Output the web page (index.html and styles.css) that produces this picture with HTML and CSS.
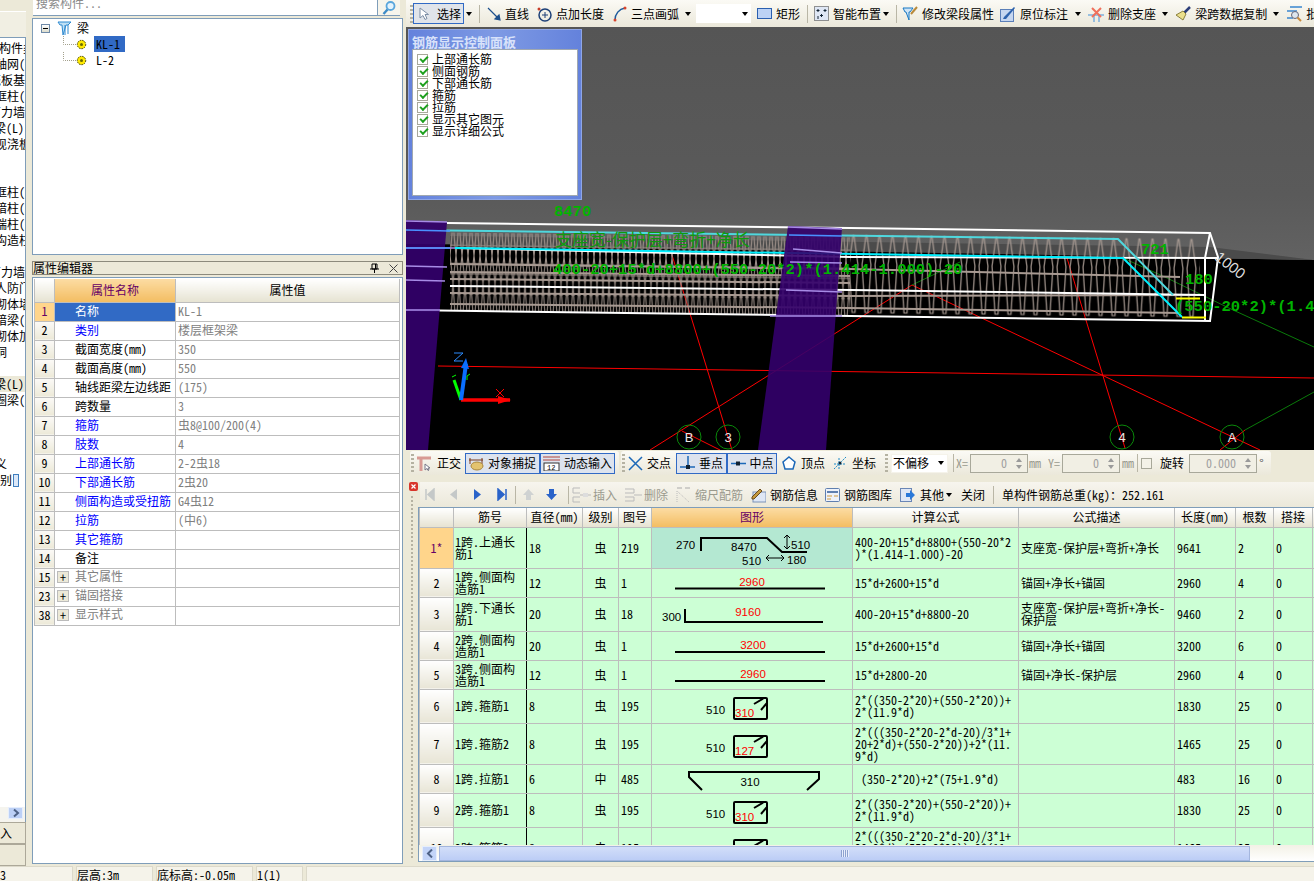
FILE: index.html
```html
<!DOCTYPE html>
<html lang="zh-CN">
<head>
<meta charset="utf-8">
<title>钢筋显示</title>
<link rel="stylesheet" href="styles.css">
</head>
<body>
<div class="app">
  <div class="main">
    <nav class="nav">
      <div class="nav-cap"></div>
      <div class="nav-cap2"></div>
      <div class="nav-list">
        <div class="nr"><span class="o1">构件类型</span></div>
        <div class="nr"><span class="o5">轴网(J)</span></div>
        <div class="nr"><span class="o11">筏板基础</span></div>
        <div class="nr"><span class="o5">框柱(Z)</span></div>
        <div class="nr"><span class="o11">剪力墙(Q)</span></div>
        <div class="nr"><span class="o6">梁(L)</span></div>
        <div class="nr"><span class="o5">现浇板</span></div>
        <div class="nr"></div>
        <div class="nr"></div>
        <div class="nr"><span class="o5">框柱(Z)</span></div>
        <div class="nr"><span class="o5">暗柱(Z)</span></div>
        <div class="nr"><span class="o5">端柱(Z)</span></div>
        <div class="nr"><span class="o5">构造柱</span></div>
        <div class="nr"></div>
        <div class="nr"><span class="o11">剪力墙</span></div>
        <div class="nr"><span class="o5">人防门</span></div>
        <div class="nr"><span class="o5">砌体墙</span></div>
        <div class="nr"><span class="o5">暗梁(A)</span></div>
        <div class="nr"><span class="o5">砌体加筋</span></div>
        <div class="nr"><span class="o5">洞</span></div>
        <div class="nr"></div>
        <div class="nr nr-sel"><span class="o6">梁(L)</span></div>
        <div class="nr"><span class="o5">圈梁(E)</span></div>
        <div class="nr"></div>
        <div class="nr"></div>
        <div class="nr"></div>
        <div class="nr"><span class="o17">定义</span></div>
        <div class="nr"><span class="o12">识别</span><i class="nav-ic"></i></div>
        <div class="nav-fill"></div>
        <div class="nav-scroll"><svg width="15" height="12" viewBox="0 0 15 12"><rect x=".5" y=".5" width="14" height="11" fill="#bcd0f6" stroke="#e6eefc"/><path d="M6 2.5l4 3.5-4 3.5" fill="none" stroke="#4d6185" stroke-width="2"/></svg></div>
      </div>
      <div class="nav-btn"><span class="o12">导入</span></div>
      <div class="nav-btn"></div>
    </nav>

    <section class="mid">
      <div class="search">
        <div class="search-in"><span>搜索构件...</span></div>
        <div class="search-btn"><svg width="16" height="16" viewBox="0 0 16 16"><circle cx="9.5" cy="6" r="4" fill="#e4f3fd" stroke="#5aa6dc" stroke-width="1.8"/><path d="M6.5 9.5L2.5 14" stroke="#3d8bc7" stroke-width="2.4"/></svg></div>
      </div>
      <div class="tree">
        <div class="t-root">
          <span class="t-minus"></span>
          <svg class="t-ic" width="15" height="16" viewBox="0 0 15 16"><path d="M1 2h13l-3 3H9l-3 10-1-10H3z" fill="#bfe0f5" stroke="#2f8ad0"/><path d="M8 5v10M11 5v9" stroke="#2f8ad0"/></svg>
          <span>梁</span>
        </div>
        <div class="t-kid">
          <svg class="t-conn" width="13" height="16" viewBox="0 0 13 16"><path d="M.5 0v8.5H13" fill="none" stroke="#a3a08c" stroke-dasharray="1 1"/></svg>
          <svg class="t-gear" width="11" height="11" viewBox="0 0 11 11"><circle cx="5.5" cy="5.5" r="4.2" fill="#ffe900" stroke="#3b3b00" stroke-dasharray="1.5 1"/><circle cx="5.5" cy="5.5" r="1.5" fill="#6a6a00"/></svg>
          <span class="t-sel">KL-1</span>
        </div>
        <div class="t-kid">
          <svg class="t-conn" width="13" height="16" viewBox="0 0 13 16"><path d="M.5 0v8.5H13" fill="none" stroke="#a3a08c" stroke-dasharray="1 1"/></svg>
          <svg class="t-gear" width="11" height="11" viewBox="0 0 11 11"><circle cx="5.5" cy="5.5" r="4.2" fill="#ffe900" stroke="#3b3b00" stroke-dasharray="1.5 1"/><circle cx="5.5" cy="5.5" r="1.5" fill="#6a6a00"/></svg>
          <span class="t-lbl">L-2</span>
        </div>
      </div>
      <div class="prop-head">
        <span>属性编辑器</span>
        <span class="prop-tools">
          <svg width="9" height="10" viewBox="0 0 9 10"><path d="M2 1h5v5H2zM0 6h9M4.5 6v4M5.5 1v5" fill="none" stroke="#000"/></svg>
          <svg width="9" height="9" viewBox="0 0 9 9"><path d="M.5.5l8 8M8.5.5l-8 8" stroke="#444"/></svg>
        </span>
      </div>
      <div class="prop-box">
        <table class="prop">
          <colgroup><col class="pc1"><col class="pc2"><col class="pc3"></colgroup>
          <tr><th class="pn"></th><th class="orange">属性名称</th><th>属性值</th></tr>
          <tr><td class="pn pn-sel">1</td><td class="nm nm-sel">名称</td><td class="v">KL-1</td></tr>
          <tr><td class="pn">2</td><td class="nm b">类别</td><td class="v">楼层框架梁</td></tr>
          <tr><td class="pn">3</td><td class="nm">截面宽度(mm)</td><td class="v">350</td></tr>
          <tr><td class="pn">4</td><td class="nm">截面高度(mm)</td><td class="v">550</td></tr>
          <tr><td class="pn">5</td><td class="nm">轴线距梁左边线距</td><td class="v">(175)</td></tr>
          <tr><td class="pn">6</td><td class="nm">跨数量</td><td class="v">3</td></tr>
          <tr><td class="pn">7</td><td class="nm b">箍筋</td><td class="v">虫8@100/200(4)</td></tr>
          <tr><td class="pn">8</td><td class="nm b">肢数</td><td class="v">4</td></tr>
          <tr><td class="pn">9</td><td class="nm b">上部通长筋</td><td class="v">2-2虫18</td></tr>
          <tr><td class="pn">10</td><td class="nm b">下部通长筋</td><td class="v">2虫20</td></tr>
          <tr><td class="pn">11</td><td class="nm b">侧面构造或受扭筋</td><td class="v">G4虫12</td></tr>
          <tr><td class="pn">12</td><td class="nm b">拉筋</td><td class="v">(中6)</td></tr>
          <tr><td class="pn">13</td><td class="nm b">其它箍筋</td><td class="v"></td></tr>
          <tr><td class="pn">14</td><td class="nm">备注</td><td class="v"></td></tr>
          <tr><td class="pn">15</td><td class="nm g"><i class="plus"></i>其它属性</td><td class="v"></td></tr>
          <tr><td class="pn">23</td><td class="nm g"><i class="plus"></i>锚固搭接</td><td class="v"></td></tr>
          <tr><td class="pn">38</td><td class="nm g"><i class="plus"></i>显示样式</td><td class="v"></td></tr>
        </table>
      </div>
    </section>

    <section class="right">
      <div class="tb top">
        <i class="grip m4"></i>
        <span class="btn sel-btn"><svg width="10" height="13" viewBox="0 0 10 13"><path d="M1 1v10l3-2.500 2 4 2-1-2-4h3.500z" fill="#fff" stroke="#7d8fa6"/></svg><span>选择</span></span>
        <i class="caret w10"></i>
        <i class="sep m5"></i>
        <span class="ti m7"><svg width="14" height="14" viewBox="0 0 14 14"><path d="M1 1l11 11M13 13l-5-1 4-4z" stroke="#1d4f8c" fill="#1d4f8c" stroke-width="1.200"/></svg><span>直线</span></span>
        <span class="ti m8"><svg width="15" height="16" viewBox="0 0 15 16"><circle cx="8" cy="9" r="6" fill="none" stroke="#1c3f77" stroke-width="1.500"/><path d="M8 6v6M5 9h6" stroke="#1c3f77"/><circle cx="2" cy="3" r="1.500" fill="#c83c28"/></svg><span>点加长度</span></span>
        <span class="ti m9"><svg width="14" height="16" viewBox="0 0 14 16"><path d="M2 14C2 8 6 3 12 2" fill="none" stroke="#1c5a9c" stroke-width="1.500"/><circle cx="2" cy="14" r="1.500" fill="#d8442c"/><circle cx="12" cy="2" r="1.500" fill="#d8442c"/></svg><span>三点画弧</span></span>
        <i class="caret w10 m4"></i>
        <span class="combo m3"><i class="caret w10"></i></span>
        <span class="ti m6"><svg width="15" height="11" viewBox="0 0 15 11"><rect x=".5" y=".5" width="14" height="10" fill="#bcd2f5" stroke="#2a5fb0"/></svg><span>矩形</span></span>
        <i class="sep m7"></i>
        <span class="ti m6"><svg width="15" height="15" viewBox="0 0 15 15"><rect x=".5" y=".5" width="14" height="14" fill="#dfe7f5" stroke="#333" stroke-dasharray="1 1"/><path d="M4 3v3M2.500 4.500h3M11 3v3M9.500 4.500h3M7.500 8v3M6 9.500h3M4 10v3" stroke="#123"/></svg><span>智能布置</span></span>
        <i class="caret w10"></i>
        <i class="sep m5"></i>
        <span class="ti m5"><svg width="16" height="16" viewBox="0 0 16 16"><path d="M1 2h10l-3 4H7v8L4 6H3z" fill="#cfe5f7" stroke="#1878c4"/><path d="M9 8l6-7" stroke="#b8893a" stroke-width="2"/></svg><span>修改梁段属性</span></span>
        <span class="ti m6"><svg width="16" height="16" viewBox="0 0 16 16"><rect x=".5" y="3.500" width="13" height="12" fill="#c5d6f0" stroke="#5b7fb8"/><path d="M4 11L14 1l1 1L6 13H3z" fill="#2d62ad"/></svg><span>原位标注</span></span>
        <i class="caret w10 m5"></i>
        <span class="ti m5"><svg width="16" height="16" viewBox="0 0 16 16"><path d="M0 9h16M6 9v7M11 9v7" stroke="#3f8fd9"/><path d="M4 2l9 9M13 2l-9 9" stroke="#f0705c" stroke-width="2"/></svg><span>删除支座</span></span>
        <i class="caret w10 m4"></i>
        <span class="ti m5"><svg width="16" height="16" viewBox="0 0 16 16"><path d="M9 7l6-6" stroke="#2e3f7a" stroke-width="2.500"/><path d="M8 5l3 3-3 6-7-5z" fill="#ece08c" stroke="#8a7f3c"/></svg><span>梁跨数据复制</span></span>
        <i class="caret w10 m4"></i>
        <span class="ti m5"><svg width="16" height="16" viewBox="0 0 16 16"><path d="M4 1h12M1 5h10M1 12h6" stroke="#3a87cf" stroke-width="1.500"/><circle cx="9" cy="9" r="3.500" fill="#dde6ee" stroke="#667"/><path d="M11.500 11.500l3.500 3.500" stroke="#c98a3c" stroke-width="2"/></svg><span>批量选择</span></span>
      </div>

      <div class="view">
        <svg class="scene" width="908" height="423" viewBox="406 27 908 423">
          <defs>
            <linearGradient id="bgG" x1="0" y1="0" x2="0" y2="1"><stop offset="0" stop-color="#555"/><stop offset=".72" stop-color="#5a5a5a"/><stop offset="1" stop-color="#626262"/></linearGradient>
            <pattern id="dense" x="0" y="222" width="6" height="86" patternUnits="userSpaceOnUse" patternTransform="skewY(.7)">
              <path d="M2 5L0 28 3 56 1 84M4 5L6 28 3 56 5 84M1 18h4M0 36h6M0 46h6M1 66h4" fill="none" stroke="#a89a92" stroke-width="1"/>
            </pattern>
            <pattern id="sparse" x="2" y="222" width="13" height="86" patternUnits="userSpaceOnUse" patternTransform="skewY(.7)">
              <path d="M6 3L2 32 5 80 8 80 11 32 7 3z" fill="none" stroke="#a89a92" stroke-width="1.200"/>
            </pattern>
          </defs>
          <rect x="406" y="27" width="908" height="423" fill="#000"/>
          <path d="M406 27H1314V260L1200 258 1000 251 700 246 406 244z" fill="url(#bgG)"/>
          <path d="M450 236L1210 247 1314 260 1200 258 1000 254 700 249 450 246z" fill="#4b4b4b"/>
          <!-- grid axes -->
          <g fill="none" stroke="#f00" stroke-width="1">
            <path d="M438 366L1314 378"/>
            <path d="M672 255L732 450"/>
            <path d="M1067 258L1125 448"/>
            <path d="M912 285L1260 450"/>
            <path d="M650 450L912 285"/>
            <path d="M682 431L720 450"/>
            <path d="M1220 450L1245 430"/>
          </g>
          <g fill="none" stroke="#0a7a0a" stroke-width="1">
            <path d="M1245 430L1314 392"/>
            <path d="M1123 258L1167 278 1233 310 1314 347"/>
            <path d="M912 285L960 262"/>
          </g>
          <!-- stirrups -->
          <path d="M450 228L850 233V316L450 311z" fill="url(#dense)"/>
          <path d="M850 233L1200 238V320L850 316z" fill="url(#sparse)"/>
          <g fill="none" stroke="#a89a92" stroke-width="2">
            <path d="M450 264L850 269 1180 277"/>
            <path d="M450 272L850 276"/>
            <path d="M450 279L850 283"/>
            <path d="M450 293L850 296 1205 295"/>
            <path d="M450 304L850 308 1180 313"/>
          </g>
          <!-- beam box -->
          <g fill="none" stroke="#fff" stroke-width="2">
            <path d="M447 223L850 228 1210 233 1218 257 1210 321 850 316 406 310"/>
            <path d="M455 248L850 257 1218 258"/>
            <path d="M450 286L850 290 1205 295"/>
            <path d="M1210 233L1205 258V321"/>
          </g>
          <path d="M406 230L1118 239 1173 295" fill="none" stroke="#4fd8de" stroke-width="2"/>
          <path d="M455 248L1123 258 1182 317" fill="none" stroke="#00f0ff" stroke-width="2"/>
          <path d="M1176 298.500H1200M1182 317.500H1206" stroke="#ff0" stroke-width="2"/>
          <!-- columns -->
          <path d="M406 220L447 222 428 450H406z" fill="#33006b" fill-opacity=".93"/>
          <path d="M788 226L842 228 826 450H758z" fill="#33006b" fill-opacity=".9"/>
          <g fill="none" stroke="#a78be6" stroke-width="1.500">
            <path d="M406 221L447 222M406 248L455 248M406 266L447 267M406 280L445 281M406 310L440 310"/>
            <path d="M788 227L842 229M793 249L842 253M790 262L842 263M786 290L842 292M770 316L842 316"/>
          </g>
          <path d="M406 230L450 231M789 235L842 236M406 248L450 248" stroke="#4a90ff" stroke-width="1.500"/>
          <!-- green dimensions -->
          <g class="dim">
            <text x="554" y="216">8470</text>
            <text x="555" y="246" class="dim-cn">支座宽-保护层+弯折+净长</text>
            <text x="553" y="274">400-20+15*d+8800+(550-20*2)*(1.414-1.000)-20</text>
            <text x="1141" y="254">721</text>
            <text x="1185" y="284">180</text>
            <text x="1175" y="311">(550-20*2)*(1.41</text>
          </g>
          <text x="1214" y="259" class="white-dim" transform="rotate(38 1214 259)">1000</text>
          <!-- axis bubbles -->
          <g fill="none" stroke="#0a8a0a">
            <circle cx="689" cy="437" r="12"/><circle cx="728" cy="437" r="12"/>
            <circle cx="1122" cy="437" r="12"/><circle cx="1232" cy="437" r="12"/>
          </g>
          <g class="bubble">
            <text x="689" y="442">B</text><text x="728" y="442">3</text>
            <text x="1122" y="442">4</text><text x="1232" y="442">A</text>
          </g>
          <!-- gizmo -->
          <path d="M461 400L510 400" stroke="#f00" stroke-width="3.500"/><path d="M498 396L511 400 498 404z" fill="#f00"/>
          <path d="M461 400L454 380" stroke="#0f0" stroke-width="3"/>
          <path d="M461 400L466 364" stroke="#0a6eff" stroke-width="4"/><path d="M461 368L466 358 469 369z" fill="#0a6eff"/>
          <path d="M454 353H463L454 361H463" fill="none" stroke="#2d8cff"/>
          <path d="M496 389L504 397M504 389L496 397" stroke="#f00"/>
          <path d="M467 376L470 374M467 380L467 376M452 377L456 375" stroke="#0f0"/>
        </svg>

        <aside class="panel">
          <div class="panel-title">钢筋显示控制面板</div>
          <div class="panel-body">
            <label class="ck"><i class="box"></i>上部通长筋</label>
            <label class="ck"><i class="box"></i>侧面钢筋</label>
            <label class="ck"><i class="box"></i>下部通长筋</label>
            <label class="ck"><i class="box"></i>箍筋</label>
            <label class="ck"><i class="box"></i>拉筋</label>
            <label class="ck"><i class="box"></i>显示其它图元</label>
            <label class="ck"><i class="box"></i>显示详细公式</label>
          </div>
        </aside>
      </div>

      <div class="snap">
        <div class="tb bar bar1">
          <i class="grip m1"></i>
          <span class="ti m3 g5"><svg width="15" height="15" viewBox="0 0 15 15"><path d="M0 2h14M4 2v13" stroke="#d89a94" stroke-width="3"/><path d="M8 8v6l2-1.500 1 2 1-.5-1-2h2z" fill="#fff" stroke="#778"/></svg><span>正交</span></span>
          <span class="btn on w75 m4"><svg width="15" height="15" viewBox="0 0 15 15"><path d="M1 2v6M13 2v6M0 4h14" stroke="#7b3a1c"/><ellipse cx="8" cy="10" rx="6" ry="4" fill="#e3c36f" stroke="#a8853a"/></svg><span>对象捕捉</span></span>
          <span class="btn on w75"><svg width="17" height="15" viewBox="0 0 17 15"><path d="M0 1h17M0 4h17" stroke="#b1443c"/><rect x="1" y="7" width="15" height="8" fill="#fff" stroke="#333"/><text x="4" y="14" class="mini">12</text></svg><span>动态输入</span></span>
        </div>
        <div class="tb bar bar2">
          <i class="grip m1"></i>
          <span class="ti m3"><svg width="15" height="15" viewBox="0 0 15 15"><path d="M1 1l13 13M14 1L1 14" stroke="#1c68b8" stroke-width="1.500"/></svg><span>交点</span></span>
          <span class="btn on w51 m5"><svg width="15" height="15" viewBox="0 0 15 15"><path d="M0 11h15M8 0v11" stroke="#1c68b8" stroke-width="1.500"/><rect x="6" y="9" width="4" height="4" fill="#123"/></svg><span>垂点</span></span>
          <span class="btn on w50"><svg width="15" height="15" viewBox="0 0 15 15"><path d="M0 7.500h15" stroke="#1c68b8" stroke-width="1.500"/><rect x="5" y="5.500" width="4" height="4" fill="#123"/></svg><span>中点</span></span>
          <span class="ti m4"><svg width="16" height="16" viewBox="0 0 16 16"><path d="M8 2l6 5-2 7H4L2 7z" fill="#fff" stroke="#1c68b8" stroke-width="1.500"/></svg><span>顶点</span></span>
          <span class="ti m7"><svg width="16" height="16" viewBox="0 0 16 16"><path d="M2 14L14 2M7 3v12M2 9h12" stroke="#1c8ac8" stroke-dasharray="2 1"/><circle cx="8" cy="8" r="1.500" fill="#123"/></svg><span>坐标</span></span>
          <i class="grip m9"></i>
          <span class="combo combo2 m3"><span>不偏移</span><i class="caret w10"></i></span>
          <i class="sep m5"></i>
          <span class="off m2">X=</span>
          <span class="spin w58 m2"><span>0</span></span>
          <span class="off m1">mm</span>
          <span class="off m7">Y=</span>
          <span class="spin w58 m2"><span>0</span></span>
          <span class="off m2">mm</span>
          <i class="sep m3"></i>
          <i class="cbx m3"></i>
          <span class="m8">旋转</span>
          <span class="spin w68 m5"><span>0.000</span></span>
          <span class="off m2 deg">°</span>
        </div>
      </div>

      <div class="rebar">
        <div class="strip">
          <span class="close-x"><svg width="9" height="9" viewBox="0 0 9 9"><rect width="9" height="9" rx="2" fill="#d8352a"/><path d="M2.500 2.500l4 4M6.500 2.500l-4 4" stroke="#fff" stroke-width="1.200"/></svg></span>
          <i class="dots"></i>
        </div>
        <div class="rebar-main">
          <div class="tb gtb">
            <svg class="m5" width="10" height="13" viewBox="0 0 10 13"><path d="M1 1v11M9 1L3 6.500 9 12z" fill="#c4c8c8" stroke="#c4c8c8" stroke-width="1.500"/></svg>
            <svg class="m14" width="9" height="13" viewBox="0 0 9 13"><path d="M8 1L1 6.500 8 12z" fill="#c4c8c8"/></svg>
            <svg class="m15" width="9" height="13" viewBox="0 0 9 13"><path d="M1 1l7 5.500L1 12z" fill="#2a63c9"/></svg>
            <svg class="m15" width="10" height="13" viewBox="0 0 10 13"><path d="M1 1l6 5.500L1 12zM9 1v11" fill="#2a63c9" stroke="#2a63c9" stroke-width="1.500"/></svg>
            <i class="sep m8"></i>
            <svg class="m7" width="11" height="11" viewBox="0 0 11 11"><path d="M5.500 0L11 6H8v5H3V6H0z" fill="#cfd2d2"/></svg>
            <svg class="m12" width="11" height="11" viewBox="0 0 11 11"><path d="M5.500 11L11 5H8V0H3v5H0z" fill="#2a63c9"/></svg>
            <i class="sep m11"></i>
            <span class="ti off m3 g1"><svg width="20" height="16" viewBox="0 0 20 16"><path d="M8 1H1v5h7M8 10H1v5h7M8 8h11" fill="none" stroke="#bbb"/><rect x="11" y="6" width="5" height="4" fill="#ddd"/></svg><span>插入</span></span>
            <span class="ti off m7 g1"><svg width="19" height="16" viewBox="0 0 19 16"><path d="M1 2h9v4H1M1 10h9v4H1M10 8h8" fill="none" stroke="#bbb"/></svg><span>删除</span></span>
            <span class="ti off m8 g5"><svg width="14" height="16" viewBox="0 0 14 16"><path d="M1 15V4l12 11" fill="none" stroke="#bbb" stroke-dasharray="1 1"/><path d="M1 1h5M9 1h5" stroke="#aaa"/></svg><span>缩尺配筋</span></span>
            <span class="ti m8"><svg width="15" height="16" viewBox="0 0 15 16"><rect x="2" y="5" width="13" height="10" fill="#dfe7f5" stroke="#7a92b8"/><path d="M1 10L9 2l2 2-8 8H1z" fill="#c59a3e" stroke="#6b4b1c"/></svg><span>钢筋信息</span></span>
            <span class="ti m7"><svg width="15" height="14" viewBox="0 0 15 14"><rect x=".5" y=".5" width="14" height="13" rx="1" fill="#eef2fa" stroke="#5f7fb0"/><path d="M2 4h11" stroke="#5f7fb0" stroke-width="2"/><path d="M2 8h5M9 8h4M2 11h4" stroke="#d09a3c"/></svg><span>钢筋图库</span></span>
            <span class="ti m8 g5"><svg width="15" height="14" viewBox="0 0 15 14"><rect x=".5" y=".5" width="11" height="13" fill="#dfe7f5" stroke="#6a86b6"/><path d="M6 5h4V2l5 5-5 5V9H6z" fill="#2a78d8"/></svg><span>其他</span></span>
            <i class="caret w10"></i>
            <span class="m7">关闭</span>
            <i class="sep m8"></i>
            <span class="m8">单构件钢筋总重(kg)：252.161</span>
          </div>
          <div class="grid-wrap">
            <table class="grid">
              <colgroup><col class="c1"><col class="c2"><col class="c3"><col class="c4"><col class="c5"><col class="c6"><col class="c7"><col class="c8"><col class="c9"><col class="c10"><col class="c11"><col class="c12"></colgroup>
              <tr class="gh"><th></th><th>筋号</th><th>直径(mm)</th><th>级别</th><th>图号</th><th class="orange">图形</th><th>计算公式</th><th>公式描述</th><th>长度(mm)</th><th>根数</th><th>搭接</th><th></th></tr>
              <tr class="h41"><td class="rn rn-sel">1*</td><td class="k">1跨.上通长<br>筋1</td><td>18</td><td class="ctr">虫</td><td>219</td>
                <td class="fig fig-sel"><svg width="200" height="40" viewBox="651 527 200 40"><path d="M700 550V537H766L781 551H806" fill="none" stroke="#000" stroke-width="2"/><path d="M786 534V548M783 537l3-3 3 3M783 545l3 3 3-3M765 557H783M768 554l-3 3 3 3M780 554l3 3-3 3" fill="none" stroke="#000"/><text x="675" y="548" class="n">270</text><text x="730" y="550" class="n">8470</text><text x="790" y="548" class="n">510</text><text x="741" y="564" class="n">510</text><text x="786" y="563" class="n">180</text></svg></td>
                <td class="f">400-20+15*d+8800+(550-20*2<br>)*(1.414-1.000)-20</td><td>支座宽-保护层+弯折+净长</td><td>9641</td><td>2</td><td>0</td><td></td></tr>
              <tr class="h29"><td class="rn">2</td><td class="k">1跨.侧面构<br>造筋1</td><td>12</td><td class="ctr">虫</td><td>1</td>
                <td class="fig"><svg width="200" height="28" viewBox="651 568 200 28"><path d="M674 587.500H824" stroke="#000" stroke-width="2"/><text x="751" y="585" class="n r mid-a">2960</text></svg></td>
                <td class="f">15*d+2600+15*d</td><td>锚固+净长+锚固</td><td>2960</td><td>4</td><td>0</td><td></td></tr>
              <tr class="h34"><td class="rn">3</td><td class="k">1跨.下通长<br>筋1</td><td>20</td><td class="ctr">虫</td><td>18</td>
                <td class="fig"><svg width="200" height="33" viewBox="651 597 200 33"><path d="M684 608V621H822" fill="none" stroke="#000" stroke-width="2"/><text x="661" y="620" class="n">300</text><text x="747" y="615" class="n r mid-a">9160</text></svg></td>
                <td class="f">400-20+15*d+8800-20</td><td>支座宽-保护层+弯折+净长-<br>保护层</td><td>9460</td><td>2</td><td>0</td><td></td></tr>
              <tr class="h29"><td class="rn">4</td><td class="k">2跨.侧面构<br>造筋1</td><td>20</td><td class="ctr">虫</td><td>1</td>
                <td class="fig"><svg width="200" height="28" viewBox="651 631 200 28"><path d="M674 651H824" stroke="#000" stroke-width="2"/><text x="752" y="648" class="n r mid-a">3200</text></svg></td>
                <td class="f">15*d+2600+15*d</td><td>锚固+净长+锚固</td><td>3200</td><td>6</td><td>0</td><td></td></tr>
              <tr class="h29"><td class="rn">5</td><td class="k">3跨.侧面构<br>造筋1</td><td>12</td><td class="ctr">虫</td><td>1</td>
                <td class="fig"><svg width="200" height="28" viewBox="651 660 200 28"><path d="M674 680H824" stroke="#000" stroke-width="2"/><text x="752" y="677" class="n r mid-a">2960</text></svg></td>
                <td class="f">15*d+2800-20</td><td>锚固+净长-保护层</td><td>2960</td><td>4</td><td>0</td><td></td></tr>
              <tr class="h34"><td class="rn">6</td><td class="k">1跨.箍筋1</td><td>8</td><td class="ctr">虫</td><td>195</td>
                <td class="fig"><svg width="200" height="33" viewBox="651 689 200 33"><rect x="733" y="697" width="33" height="21" rx="1" fill="none" stroke="#000" stroke-width="2"/><path d="M753 703L763 697M760 709L766 702" stroke="#000" stroke-width="2"/><text x="705" y="713" class="n">510</text><text x="734" y="716" class="n r">310</text></svg></td>
                <td class="f">2*((350-2*20)+(550-2*20))+<br>2*(11.9*d)</td><td></td><td>1830</td><td>25</td><td>0</td><td></td></tr>
              <tr class="h41"><td class="rn">7</td><td class="k">1跨.箍筋2</td><td>8</td><td class="ctr">虫</td><td>195</td>
                <td class="fig"><svg width="200" height="40" viewBox="651 723 200 40"><rect x="733" y="735" width="33" height="21" rx="1" fill="none" stroke="#000" stroke-width="2"/><path d="M753 741L763 735M760 747L766 740" stroke="#000" stroke-width="2"/><text x="705" y="751" class="n">510</text><text x="734" y="754" class="n r">127</text></svg></td>
                <td class="f">2*(((350-2*20-2*d-20)/3*1+<br>20+2*d)+(550-2*20))+2*(11.<br>9*d)</td><td></td><td>1465</td><td>25</td><td>0</td><td></td></tr>
              <tr class="h29"><td class="rn">8</td><td class="k">1跨.拉筋1</td><td>6</td><td class="ctr">中</td><td>485</td>
                <td class="fig"><svg width="200" height="28" viewBox="651 764 200 28"><path d="M701 789L688 776V771H818V778L806 789" fill="none" stroke="#000" stroke-width="2"/><text x="749" y="785" class="n mid-a">310</text></svg></td>
                <td class="f">&nbsp;(350-2*20)+2*(75+1.9*d)</td><td></td><td>483</td><td>16</td><td>0</td><td></td></tr>
              <tr class="h34"><td class="rn">9</td><td class="k">2跨.箍筋1</td><td>8</td><td class="ctr">虫</td><td>195</td>
                <td class="fig"><svg width="200" height="33" viewBox="651 793 200 33"><rect x="733" y="801" width="33" height="21" rx="1" fill="none" stroke="#000" stroke-width="2"/><path d="M753 807L763 801M760 813L766 806" stroke="#000" stroke-width="2"/><text x="705" y="817" class="n">510</text><text x="734" y="820" class="n r">310</text></svg></td>
                <td class="f">2*((350-2*20)+(550-2*20))+<br>2*(11.9*d)</td><td></td><td>1830</td><td>25</td><td>0</td><td></td></tr>
              <tr class="h41"><td class="rn">10</td><td class="k">2跨.箍筋2</td><td>8</td><td class="ctr">虫</td><td>195</td>
                <td class="fig"><svg width="200" height="40" viewBox="651 827 200 40"><rect x="733" y="839" width="33" height="21" rx="1" fill="none" stroke="#000" stroke-width="2"/><path d="M753 845L763 839M760 851L766 844" stroke="#000" stroke-width="2"/></svg></td>
                <td class="f">2*(((350-2*20-2*d-20)/3*1+<br>20+2*d)+(550-2*20))+2*(11.<br>9*d)</td><td></td><td>1465</td><td>25</td><td>0</td><td></td></tr>
            </table>
          </div>
          <div class="hscroll">
            <span class="hs-btn"><svg width="8" height="9" viewBox="0 0 8 9"><path d="M6 .5L2 4.500 6 8.500" fill="none" stroke="#4d6185" stroke-width="2"/></svg></span>
            <span class="hs-thumb"><i class="hs-grip"></i></span>
          </div>
        </div>
      </div>
    </section>
  </div>

  <footer class="status">
    <span class="st st1">3</span>
    <span class="st st2">层高:3m</span>
    <span class="st st3">底标高:-0.05m</span>
    <span class="st st4">1(1)</span>
    <span class="st st5"></span>
  </footer>
</div>
</body>
</html>
```
FILE: styles.css
```css
* { box-sizing: border-box; }
html, body { margin: 0; height: 100%; overflow: hidden; }
body {
  background: #ece9d8;
  color: #000;
  font: 12px/12px "Noto Sans Mono CJK SC", "Noto Sans CJK SC", "Liberation Mono", monospace;
}
i { display: block; font-style: normal; flex: none; }
svg { display: block; flex: none; }

.app { width: 1314px; height: 881px; display: flex; flex-direction: column; }
.main { height: 866px; display: flex; }

/* left navigation strip */
.nav { width: 26px; margin-right: 6px; display: flex; flex-direction: column; }
.nav-cap { height: 12px; background: #ece9d8; border-bottom: 1px solid #fff; }
.nav-cap2 { height: 26px; background: #f1efe3; border-bottom: 1px solid #7f9db9; }
.nav-list { flex: 1; background: #fff; border-right: 1px solid #7f9db9; padding-top: 2px; display: flex; flex-direction: column; overflow: hidden; }
.nr { height: 16px; flex: none; display: flex; align-items: center; white-space: nowrap; overflow: hidden; }
.nr-sel { background: #ece9d8; }
.nav-ic { width: 6px; height: 13px; margin-left: 1px; background: #dce8f8; border: 1px solid #3f7fc0; }
.nav-fill { flex: 1; }
.nav-scroll { height: 15px; flex: none; display: flex; justify-content: flex-end; padding-right: 2px; background: #f5f4ee; }
.nav-btn { height: 22px; flex: none; background: #ece9d8; border: 1px solid #aca899; border-left: 0; display: flex; align-items: center; white-space: nowrap; overflow: hidden; }
.o1 { margin-left: -1px; } .o5 { margin-left: -5px; } .o6 { margin-left: -6px; }
.o11 { margin-left: -11px; } .o12 { margin-left: -12px; } .o17 { margin-left: -17px; }

/* middle column */
.mid { width: 371px; margin-right: 3px; display: flex; flex-direction: column; }
.search { height: 16px; display: flex; margin: 0 3px 2px 1px; border-bottom: 1px solid #7f9db9; flex: none; }
.search-in { flex: 1; background: #fff; color: #8a8a8a; overflow: hidden; padding-left: 3px; border-right: 1px solid #7f9db9; }
.search-in span { display: block; margin-top: -3px; }
.search-btn { width: 22px; display: flex; justify-content: center; background: #f7f5ec; }
.tree { height: 237px; background: #fff; border: 1px solid #7f9db9; padding: 1px 0 0 8px; flex: none; }
.t-root { display: flex; align-items: center; height: 16px; }
.t-minus { width: 9px; height: 9px; border: 1px solid #6f8aa8; background: linear-gradient(#fff, #dcdccc) ; position: relative; margin-right: 7px; }
.t-minus::after { content: ""; position: absolute; left: 1px; right: 1px; top: 3px; height: 1px; background: #000; }
.t-ic { margin-right: 5px; }
.t-kid { display: flex; align-items: center; height: 16px; padding-left: 22px; }
.t-gear { margin-right: 7px; }
.t-sel { background: #316ac5; color: #000; height: 16px; width: 31px; line-height: 15px; padding-left: 2px; }
.t-lbl { padding-left: 2px; }
.prop-head { height: 14px; margin-top: 6px; background: #ece9d8; border: 1px solid #8c8a7c; display: flex; justify-content: space-between; align-items: center; flex: none; }
.prop-tools { display: flex; gap: 10px; padding-right: 4px; align-items: center; }
.prop-box { height: 587px; margin-top: 2px; background: #fff; border: 1px solid #7f9db9; padding: 1px; flex: none; }
table { border-collapse: collapse; table-layout: fixed; }
.prop { width: 365px; }
.pc1 { width: 20px; } .pc2 { width: 121px; } .pc3 { width: 224px; }
.prop th { height: 23px; font-weight: 400; background: linear-gradient(#fff, #e6e3d2); border: 1px solid #bdbdbd; border-top: 0; padding: 0; }
.prop td { height: 19px; padding: 0 0 2px; border: 1px solid #bdbdbd; }
.orange { background: linear-gradient(#fcdca3, #f3bd62) !important; color: #660066; }
.pn { text-align: center; background: linear-gradient(#fbfaf7, #ece9d8); }
.pn-sel { background: #ffd58b; color: #660066; }
.nm { padding-left: 20px !important; white-space: nowrap; overflow: hidden; }
.nm-sel { background: #316ac5; color: #fff; }
.b { color: #0000ff; }
.g { color: #808080; padding-left: 2px !important; }
.plus { display: inline-block; width: 12px; height: 12px; margin-right: 6px; vertical-align: -2px; background: #ece9d8; border: 1px solid #bbb; position: relative; }
.plus::before { content: "+"; position: absolute; left: 0; right: 0; top: -1px; text-align: center; color: #000; font-size: 12px; }
.v { color: #808080; padding-left: 2px !important; }

/* right column */
.right { width: 908px; display: flex; flex-direction: column; }
.tb { display: flex; align-items: center; white-space: nowrap; }
.top { height: 27px; background: linear-gradient(#fbfaf5, #ebe8da); overflow: hidden; flex: none; }
.grip { width: 3px; height: 18px; background: repeating-linear-gradient(#b5b2a2 0 2px, transparent 2px 4px); }
.sep { width: 1px; height: 18px; background: #b9b6a6; }
.caret { width: 10px; height: 10px; position: relative; }
.caret::after { content: ""; position: absolute; left: 2px; top: 3px; border: 3px solid transparent; border-top: 4px solid #000; border-bottom: 0; }
.ti { display: inline-flex; align-items: center; gap: 4px; flex: none; }
.g1 { gap: 1px; } .g5 { gap: 5px; }
.m1 { margin-left: 1px; } .m2 { margin-left: 2px; } .m3 { margin-left: 3px; }
.m4 { margin-left: 4px; } .m5 { margin-left: 5px; } .m6 { margin-left: 6px; } .m7 { margin-left: 7px; }
.m8 { margin-left: 8px; } .m9 { margin-left: 9px; } .m11 { margin-left: 11px; } .m12 { margin-left: 12px; }
.m14 { margin-left: 14px; } .m15 { margin-left: 15px; }
.btn { display: inline-flex; align-items: center; gap: 4px; height: 21px; flex: none; border: 1px solid transparent; }
.sel-btn { width: 51px; background: #e0e4ea; border-color: #316ac5; padding-left: 5px; gap: 8px; }
.on { background: #dde3ee; border-color: #316ac5; justify-content: center; }
.w75 { width: 75px; } .w51 { width: 51px; } .w50 { width: 50px; }
.combo { width: 55px; height: 19px; background: #fff; display: inline-flex; align-items: center; justify-content: flex-end; padding-right: 1px; flex: none; }
.combo2 { width: 57px; justify-content: space-between; padding-left: 1px; border: 1px solid #f5f3ea; }

.view { height: 423px; position: relative; background: #000; flex: none; overflow: hidden; }
.scene { width: 908px; height: 423px; }
.dim text { fill: #00b400; font: 700 15.5px "Liberation Mono", monospace; }
.dim .dim-cn { font: 17px "Noto Sans CJK SC", sans-serif; fill: #0f9a0f; }
.white-dim { fill: #dcdcdc; font: 15px "Liberation Sans", sans-serif; }
.bubble text { fill: #e8e8e8; font: 13px "Liberation Sans", sans-serif; text-anchor: middle; }
.mini { font: 7px "Liberation Mono", monospace; fill: #000; }
.panel { position: absolute; left: 2px; top: 2px; width: 174px; height: 171px; background: linear-gradient(90deg, #6482dc, #7e9ae4 50%, #6482dc); border: 1px solid #8fa6e6; padding: 0 3px 3px; display: flex; flex-direction: column; }
.panel-title { height: 19px; font-size: 13px; line-height: 24px; color: #d8e2fa; font-weight: 700; flex: none; white-space: nowrap; }
.panel-body { flex: 1; background: #fff; border: 1px solid #a0a8b0; padding: 3px 4px; }
.ck { display: flex; align-items: center; height: 12px; gap: 4px; white-space: nowrap; }
.box { width: 11px; height: 11px; background: #fff; border: 1px solid #a8a89a; position: relative; }
.box::after { content: ""; position: absolute; left: 2px; top: 1px; width: 6px; height: 3px; border-left: 2px solid #1ea01e; border-bottom: 2px solid #1ea01e; transform: rotate(-45deg); }

.snap { height: 28px; display: flex; align-items: center; padding: 0 0 2px 4px; flex: none; }
.bar { height: 24px; background: linear-gradient(#fbfaf5, #ebe8da); border-radius: 3px; }
.bar1 { width: 209px; }
.bar2 { width: 650px; margin-left: 2px; }
.off { color: #9a9a8e; }
.deg { color: #555; }
.spin { height: 19px; display: inline-flex; align-items: center; justify-content: flex-end; padding-right: 20px; background: #f1efe4; border: 1px solid #a8a89a; color: #a0a0a0; flex: none; position: relative; }
.spin::after { content: ""; position: absolute; right: 5px; top: 3px; border: 3px solid transparent; border-bottom: 4px solid #9a9a9a; border-top: 0; }
.spin::before { content: ""; position: absolute; right: 5px; bottom: 3px; border: 3px solid transparent; border-top: 4px solid #9a9a9a; border-bottom: 0; }
.w58 { width: 58px; } .w68 { width: 68px; }
.cbx { width: 11px; height: 11px; background: #f4f2e8; border: 1px solid #a8a89a; }

.rebar { height: 388px; display: flex; flex: none; }
.strip { width: 12px; padding-top: 4px; display: flex; flex-direction: column; align-items: center; gap: 5px; }
.close-x { display: block; margin-left: 2px; }
.dots { width: 2px; flex: 1; margin-bottom: 6px; background: repeating-linear-gradient(#b5b2a2 0 2px, transparent 2px 4px); }
.rebar-main { flex: 1; min-width: 0; display: flex; flex-direction: column; padding-top: 4px; }
.gtb { height: 25px; background: linear-gradient(#f7f5ee, #ebe8da); margin-left: 2px; flex: none; }
.grid-wrap { height: 338px; overflow: hidden; background: #fff; border: 1px solid #7f9db9; border-bottom: 0; border-right: 0; flex: none; }
.grid { width: 905px; }
.c1 { width: 34px; } .c2 { width: 73px; } .c3 { width: 56px; } .c4 { width: 36px; } .c5 { width: 33px; }
.c6 { width: 201px; } .c7 { width: 166px; } .c8 { width: 156px; } .c9 { width: 61px; } .c10 { width: 38px; }
.c11 { width: 39px; } .c12 { width: 12px; }
.grid th { height: 19px; padding: 0; font-weight: 400; background: linear-gradient(#fff, #e6e3d2); border: 1px solid #bdbdbd; border-top: 0; }
.grid td { padding: 0 2px; border: 1px solid #bdbdbd; background: #ccffd5; vertical-align: middle; }
.h29 td { height: 29px; } .h34 td { height: 34px; } .h41 td { height: 41px; }
.grid .rn { background: linear-gradient(#fff, #e8e5d6); text-align: center; }
.grid .rn-sel { background: #ffd58b; color: #660066; }
.grid .k { border-right-color: #000; padding-left: 1px; }
.grid .ctr { text-align: center; padding: 0; }
.grid .fig { padding: 0; }
.grid .fig-sel { background: #b4e8d2; }
.n { font: 11.5px "Liberation Sans", sans-serif; fill: #000; }
.n.r { fill: #f00; }
.mid-a { text-anchor: middle; }
.hscroll { height: 17px; flex: none; display: flex; align-items: center; padding-left: 3px; gap: 2px; background: linear-gradient(#f3f1e6, #fff); border-left: 1px solid #7f9db9; border-bottom: 1px solid #7f9db9; }
.hs-btn { width: 15px; height: 15px; display: flex; align-items: center; justify-content: center; background: #c3d4f8; border: 1px solid #e6eefc; }
.hs-thumb { width: 811px; height: 15px; background: linear-gradient(#d2def9, #bccdf6); border: 1px solid #a4b6de; display: flex; align-items: center; justify-content: center; }
.hs-grip { width: 8px; height: 7px; background: repeating-linear-gradient(90deg, #8da2cf 0 1px, #e8eefc 1px 2px); }

/* status bar */
.status { height: 15px; display: flex; overflow: hidden; }
.st { background: #f5f3ea; border: 1px solid #dcd9ca; border-bottom: 0; padding-left: 0; line-height: 16px; height: 15px; margin-right: 3px; flex: none; }
.st1 { width: 73px; border-left: 0; }
.st2 { width: 77px; }
.st3 { width: 97px; }
.st4 { width: 47px; }
.st5 { width: 1009px; margin-right: 0; }
```
